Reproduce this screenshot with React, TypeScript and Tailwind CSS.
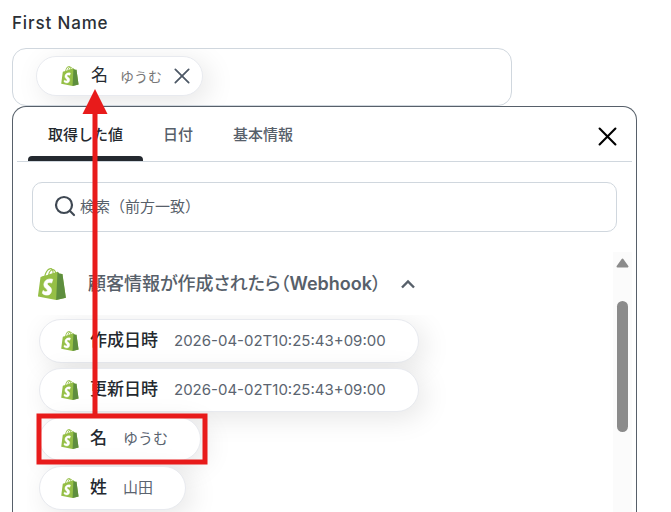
import React, { useState } from "react";

interface ValueItem {
    label: string;
    value: string;
}

const TABS = ["取得した値", "日付", "基本情報"];

const ITEMS: ValueItem[] = [
    { label: "作成日時", value: "2026-04-02T10:25:43+09:00" },
    { label: "更新日時", value: "2026-04-02T10:25:43+09:00" },
    { label: "名", value: "ゆうむ" },
    { label: "姓", value: "山田" },
];

const ShopifyIcon: React.FC<{ className?: string }> = ({ className }) => (
    <svg viewBox="0 0 256 292" className={className} aria-hidden="true">
        <path
            fill="#95BF46"
            d="M223.774 57.34c-.201-1.46-1.48-2.268-2.537-2.357-1.055-.088-23.383-1.743-23.383-1.743s-15.507-15.395-17.209-17.099c-1.703-1.703-5.029-1.185-6.32-.805-.19.056-3.388 1.043-8.678 2.68-5.18-14.906-14.322-28.604-30.405-28.604-.444 0-.901.018-1.358.044C129.31 3.407 123.644.779 118.75.779c-37.465 0-55.364 46.835-60.976 70.635-14.558 4.511-24.9 7.718-26.221 8.133-8.126 2.549-8.383 2.805-9.45 10.462C21.3 95.806.038 260.235.038 260.235l165.678 31.042 89.77-19.42S223.973 58.8 223.775 57.34zM156.49 40.848l-14.019 4.339c.005-.988.01-1.96.01-3.023 0-9.264-1.286-16.723-3.349-22.636 8.287 1.04 13.806 10.469 17.358 21.32zm-27.638-19.483c2.304 5.773 3.802 14.058 3.802 25.238 0 .572-.005 1.095-.01 1.624-9.117 2.824-19.024 5.89-28.953 8.966 5.575-21.516 16.025-31.908 25.161-35.828zm-11.131-10.537c1.617 0 3.246.549 4.805 1.622-12.007 5.65-24.877 19.88-30.312 48.297l-22.886 7.088C75.694 46.16 90.81 10.828 117.72 10.828z"
        />
        <path
            fill="#5E8E3E"
            d="M221.237 54.983c-1.055-.088-23.383-1.743-23.383-1.743s-15.507-15.395-17.209-17.099c-.637-.634-1.496-.959-2.394-1.099l-12.527 256.233 89.762-19.418S223.972 58.8 223.774 57.34c-.201-1.46-1.48-2.268-2.537-2.357"
        />
        <path
            fill="#FFF"
            stroke="#FFF"
            strokeWidth="6"
            d="M135.242 104.585l-11.069 32.926s-9.698-5.176-21.586-5.176c-17.428 0-18.305 10.937-18.305 13.693 0 15.038 39.2 20.8 39.2 56.024 0 27.713-17.577 45.558-41.277 45.558-28.44 0-42.984-17.7-42.984-17.7l7.615-25.16s14.95 12.835 27.565 12.835c8.243 0 11.596-6.49 11.596-11.232 0-19.616-32.16-20.491-32.16-52.724 0-27.129 19.472-53.382 58.778-53.382 15.145 0 22.627 4.338 22.627 4.338"
        />
    </svg>
);

const CrossIcon: React.FC<{ className?: string }> = ({ className }) => (
    <svg viewBox="0 0 18 18" className={className} fill="none" stroke="currentColor" strokeWidth="2" strokeLinecap="round" aria-hidden="true">
        <path d="M1.500 1.500l15 15M16.500 1.500l-15 15" />
    </svg>
);

const ValuePill: React.FC<{ item: ValueItem }> = ({ item }) => (
    <button
        type="button"
        className="flex h-[44px] items-center rounded-full border border-[#e8eaef] bg-white pr-8 pl-[21px] shadow-[6px_6px_28px_rgba(0,0,0,0.1)]"
    >
        <ShopifyIcon className="h-5 w-[18px]" />
        <span className="ml-[11px] text-[17px] font-medium text-[#24292f]">{item.label}</span>
        <span className="ml-4 text-[15px] text-[#5b6470]">{item.value}</span>
    </button>
);

// Red frame round the picked value and the arrow up to the field
const DragGuide: React.FC = () => (
    <svg className="pointer-events-none absolute top-[88px] left-[36px] h-[377px] w-[172px]" viewBox="0 0 172 377" aria-hidden="true">
        <path d="M59 20V328" stroke="#e81b1b" strokeWidth="5" />
        <path d="M59 1L71.500 26H46.500z" fill="#e81b1b" />
        <rect x="3" y="328" width="166" height="46" fill="none" stroke="#e81b1b" strokeWidth="5" />
    </svg>
);

const App: React.FC = () => {
    const [activeTab, setActiveTab] = useState(TABS[0]);
    const [isOpen, setIsOpen] = useState(true);
    const [query, setQuery] = useState("");

    const visibleItems = ITEMS.filter((item) => item.label.startsWith(query));

    return (
        <main className="relative flex h-screen flex-col overflow-hidden bg-white pr-[34px] pl-3 font-['Inter','Noto_Sans_CJK_JP',sans-serif]">
            <h1 className="flex h-12 items-center text-[17px] font-medium tracking-wider text-[#2b3036]">First Name</h1>

            <div className="flex h-[58px] w-full max-w-[500px] shrink-0 items-center overflow-hidden rounded-[14px] border border-[#d0d7de] px-[23px]">
                <div className="mb-[2px] flex h-10 items-center rounded-full border border-[#e8eaef] bg-white pr-3 pl-6 shadow-[6px_6px_28px_rgba(0,0,0,0.1)]">
                    <ShopifyIcon className="h-5 w-[18px]" />
                    <span className="ml-3 text-[17px] text-[#24292f]">名</span>
                    <span className="ml-3 text-[14px] text-[#777777]">ゆうむ</span>
                    <button type="button" aria-label="値を削除" className="ml-3 text-[#4d5866]">
                        <CrossIcon className="size-4" />
                    </button>
                </div>
            </div>

            <section className="flex min-h-0 flex-1 flex-col rounded-t-[14px] border border-b-0 border-[#57606a] px-1">
                <header className="flex h-[55px] shrink-0 items-stretch justify-between border-b border-[#d0d7de] pr-[15px] pl-[11px]">
                    <div role="tablist" className="flex">
                        {TABS.map((tab) => (
                            <button
                                key={tab}
                                type="button"
                                role="tab"
                                aria-selected={tab === activeTab}
                                onClick={() => setActiveTab(tab)}
                                className={
                                    tab === activeTab
                                        ? "flex flex-col text-[15px] font-medium text-[#24292f]"
                                        : "flex flex-col text-[15px] font-medium text-[#57606a]"
                                }
                            >
                                <span className="flex flex-1 items-center px-5 pt-2">{tab}</span>
                                <span className={tab === activeTab ? "h-[5px] w-full rounded-t bg-[#24292f]" : "h-[5px] w-full"} />
                            </button>
                        ))}
                    </div>
                    <button type="button" aria-label="閉じる" className="pt-1 text-black">
                        <CrossIcon className="size-[19px]" />
                    </button>
                </header>

                <label className="mx-[15px] mt-5 flex h-[50px] shrink-0 items-center rounded-[10px] border border-[#d0d7de] pr-4 pl-5">
                    <svg viewBox="0 0 24 24" className="mb-[2px] size-6 shrink-0 text-[#3f4853]" fill="none" stroke="currentColor" strokeWidth="2.200" strokeLinecap="round" aria-hidden="true">
                        <circle cx="11" cy="11" r="8" />
                        <path d="M17 17l4 4" />
                    </svg>
                    <input
                        type="text"
                        aria-label="検索"
                        value={query}
                        onChange={(e) => setQuery(e.target.value)}
                        placeholder="検索（前方一致）"
                        className="ml-[3px] w-full min-w-0 bg-transparent text-[15px] text-[#24292f] outline-none placeholder:text-[#57606a]"
                    />
                </label>

                <div className="mt-5 flex min-h-0 flex-1">
                    <div className="min-w-0 flex-1 overflow-hidden pl-[10px]">
                        <button
                            type="button"
                            aria-expanded={isOpen}
                            onClick={() => setIsOpen(!isOpen)}
                            className="flex h-[63px] items-center pl-[11px] text-[18px] font-medium text-[#57606a]"
                        >
                            <ShopifyIcon className="h-8 w-7" />
                            <span className="ml-[22px] [font-feature-settings:'palt']">
                                顧客情報が作成されたら（<span className="font-semibold">Webhook</span>）
                            </span>
                            <svg viewBox="0 0 14 10" className="ml-5 h-[10px] w-[14px]" fill="none" stroke="currentColor" strokeWidth="2.400" aria-hidden="true">
                                <path d="M1 8.500L7 2.500L13 8.500" />
                            </svg>
                        </button>
                        {isOpen && (
                            <ul className="flex flex-col items-start gap-[5px] overflow-hidden px-3 pt-1 pb-8">
                                {visibleItems.map((item) => (
                                    <li key={item.label}>
                                        <ValuePill item={item} />
                                    </li>
                                ))}
                            </ul>
                        )}
                    </div>

                    <div className="flex w-[19px] flex-col items-center bg-[#fbfbfb] pt-[6px]" aria-hidden="true">
                        <svg viewBox="0 0 13 10" className="h-[10px] w-[13px]">
                            <path d="M6.500 1.500L11.500 8.500H1.500z" fill="#8b8b8b" stroke="#8b8b8b" strokeWidth="2" strokeLinejoin="round" />
                        </svg>
                        <div className="mt-[33px] h-[131px] w-[11px] rounded-full bg-[#8b8b8b]" />
                    </div>
                </div>
            </section>

            <DragGuide />
        </main>
    );
};

export default App;
